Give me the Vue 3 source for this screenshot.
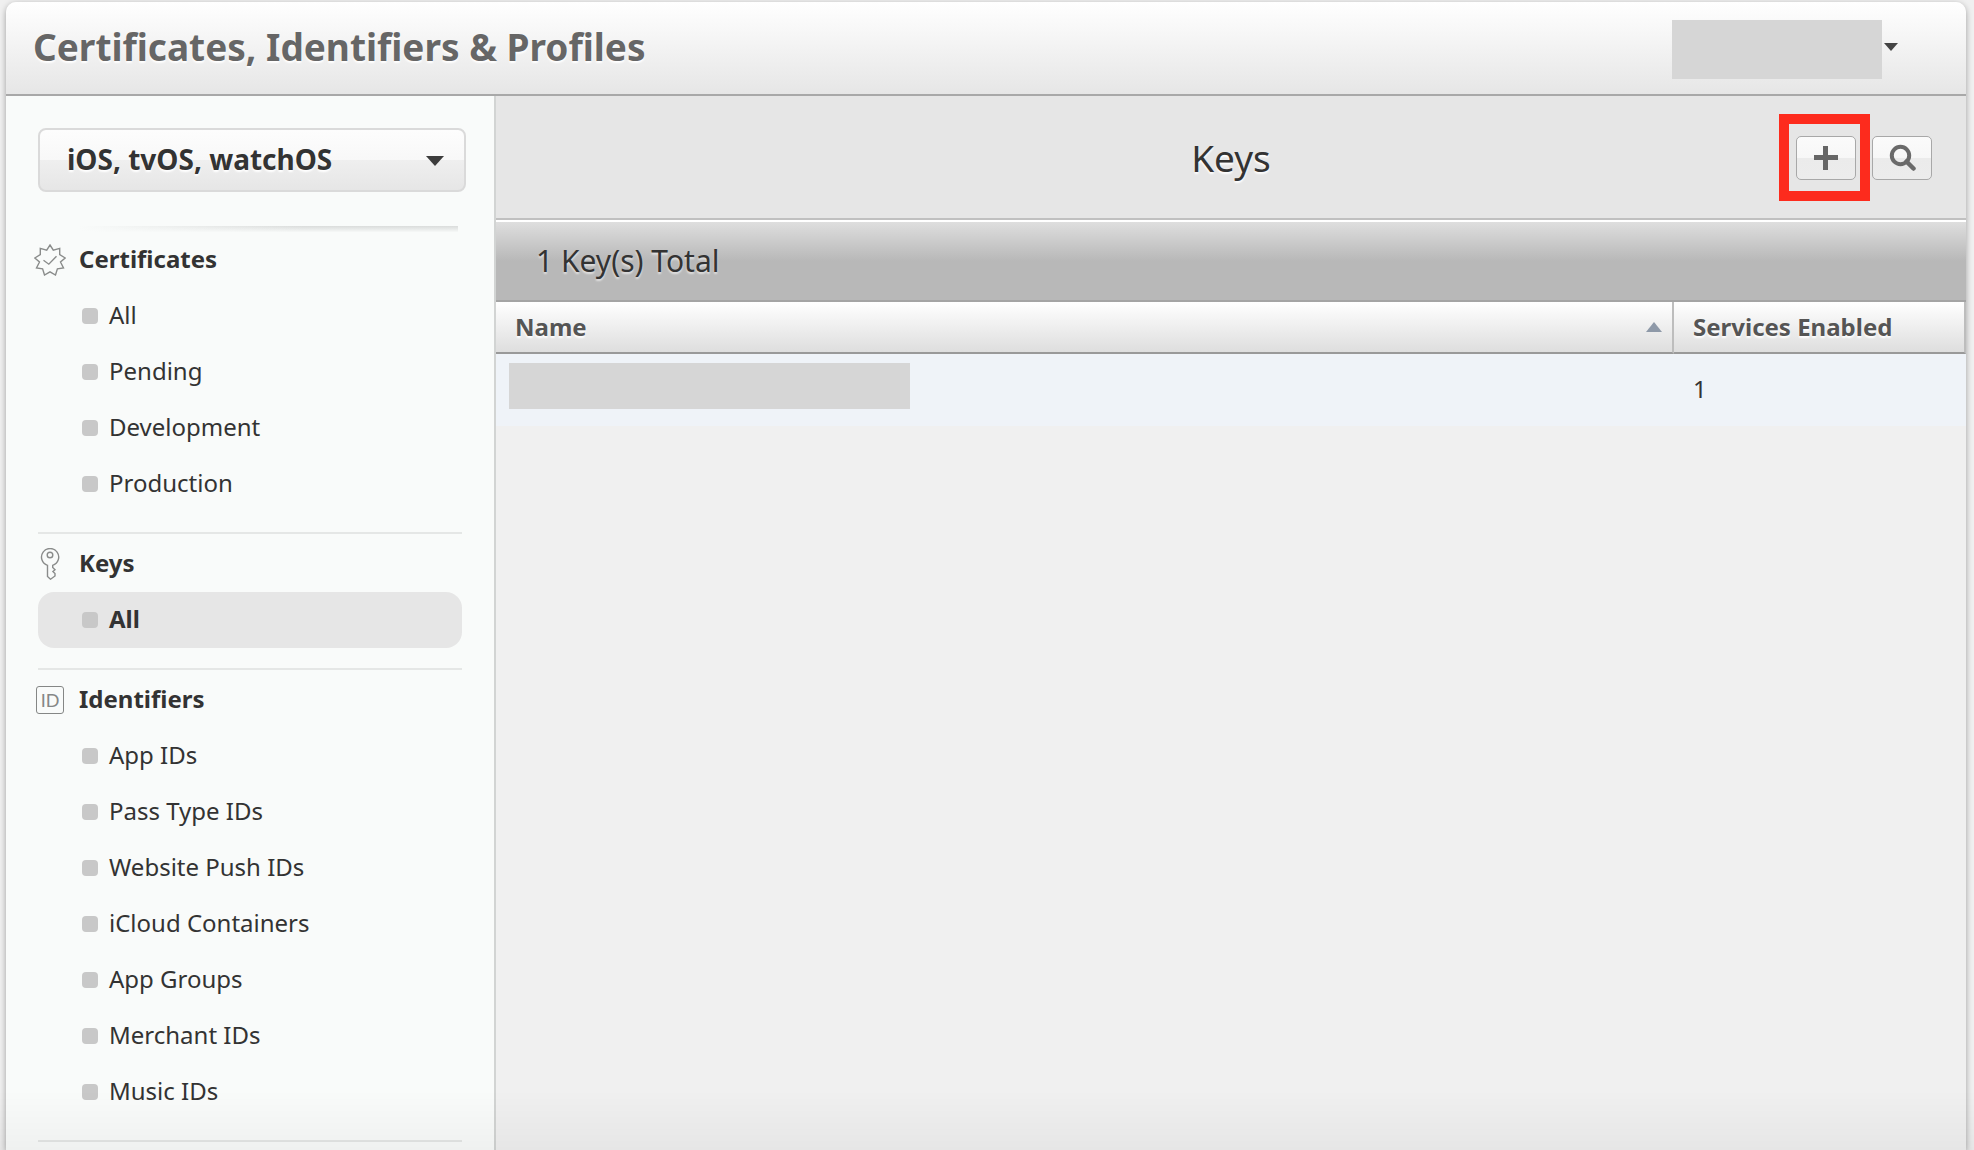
<script setup>
import { ref } from 'vue'

const platform = ref('iOS, tvOS, watchOS')

const groups = [
  { title: 'Certificates', icon: 'seal', items: ['All', 'Pending', 'Development', 'Production'] },
  { title: 'Keys', icon: 'key', items: ['All'], active: 'All' },
  {
    title: 'Identifiers',
    icon: 'id',
    items: ['App IDs', 'Pass Type IDs', 'Website Push IDs', 'iCloud Containers', 'App Groups', 'Merchant IDs', 'Music IDs'],
  },
]
</script>

<template>
  <div class="page">
    <div class="panel">
      <header class="topbar">
        <h1>Certificates, Identifiers &amp; Profiles</h1>
        <button class="account" type="button" aria-label="Account">
          <span class="account-name"></span>
          <svg width="14" height="8" viewBox="0 0 14 8"><path d="M0 0H14L7 8Z" fill="#444" /></svg>
        </button>
      </header>

      <div class="body">
        <aside class="sidebar">
          <div class="platform">
            <select v-model="platform" aria-label="Platform">
              <option>iOS, tvOS, watchOS</option>
              <option>macOS</option>
            </select>
            <svg class="platform-arrow" width="18" height="10" viewBox="0 0 18 10"><path d="M0 0H18L9 10Z" fill="#3c3c3c" /></svg>
          </div>
          <div class="fade-rule"></div>

          <nav>
            <section v-for="group in groups" :key="group.title" class="group">
              <h2>
                <svg v-if="group.icon === 'seal'" width="32" height="32" viewBox="0 0 32 32" fill="none" stroke="#8a8c8b" stroke-width="1.4">
                  <path d="M16 1L19.300 6.100L25.700 4.400L25.700 10.700L31.200 14L26.500 18L29.500 24L23.400 24.800L21.500 31L16 27.800L10.500 31L8.600 24.800L2.500 24L5.500 18L.8 14L6.300 10.700L6.300 4.400L12.700 6.100Z" />
                  <path d="M9.500 16.300L14.800 20.200L22.500 12.300" />
                </svg>
                <svg v-else-if="group.icon === 'key'" width="32" height="32" viewBox="0 0 32 32" fill="none" stroke="#8a8c8b" stroke-width="1.4">
                  <path d="M13.500 17.300A8.600 8.600 0 1 1 18.700 17.300V19.500L21 21.700L18.900 23.600L21 25.500V28L16.500 31.200L13.500 28.500Z" />
                  <circle cx="16" cy="7" r="2.800" />
                </svg>
                <span v-else class="id-icon" aria-hidden="true">ID</span>
                <span class="label">{{ group.title }}</span>
              </h2>
              <ul>
                <li v-for="item in group.items" :key="item">
                  <a href="#" :class="{ active: item === group.active }"><span class="label">{{ item }}</span></a>
                </li>
              </ul>
            </section>
          </nav>
        </aside>

        <main class="content">
          <div class="toolbar">
            <h2>Keys</h2>
            <div class="actions">
              <span class="highlight">
                <button type="button" aria-label="Add key">
                  <svg width="24" height="24" viewBox="0 0 24 24"><path d="M9 0H14V9H24V14H14V24H9V14H0V9H9Z" fill="#666" /></svg>
                </button>
              </span>
              <button type="button" aria-label="Search">
                <svg width="28" height="28" viewBox="0 0 28 28" fill="none" stroke="#6a6a6a">
                  <circle cx="12.500" cy="11.500" r="8.700" stroke-width="4" />
                  <path d="M18.500 17.500L25.500 24.500" stroke-width="4.500" stroke-linecap="round" />
                </svg>
              </button>
            </div>
          </div>

          <p class="summary">1 Key(s) Total</p>

          <table>
            <thead>
              <tr>
                <th>
                  <div class="sortable">
                    Name
                    <svg width="16" height="10" viewBox="0 0 16 10"><path d="M0 10L8 0L16 10Z" fill="#8e99a8" /></svg>
                  </div>
                </th>
                <th class="services">Services Enabled</th>
              </tr>
            </thead>
            <tbody>
              <tr>
                <td><div class="key-name"></div></td>
                <td>1</td>
              </tr>
            </tbody>
          </table>
        </main>
      </div>
    </div>
    <div class="bottom-fade"></div>
  </div>
</template>

<style>
body {
  background: #f0f0f0;
}
</style>

<style scoped>
.page {
  box-sizing: border-box;
  display: flex;
  min-height: 100vh;
  padding: 2px 8px 0 6px;
  font-family: "Lucida Grande", "Noto Sans", sans-serif;
  font-size: 24px;
  line-height: 32px;
  color: #333;
}

h1,
h2,
p,
ul {
  margin: 0;
  padding: 0;
}

.panel {
  flex: 1;
  display: flex;
  flex-direction: column;
  border-radius: 10px 10px 0 0;
  background: #f0f0f0;
  box-shadow: 0 2px 6px rgba(0, 0, 0, 0.35);
}

.topbar {
  display: flex;
  align-items: flex-start;
  justify-content: space-between;
  height: 92px;
  padding: 0 68px 0 27px;
  border-bottom: 2px solid #a8a8a8;
  border-radius: 10px 10px 0 0;
  background: linear-gradient(#fff, #e6e6e6);
}

h1 {
  font-size: 37px;
  line-height: 90px;
  color: #666;
  text-shadow: 0 2px 2px #fff;
}

.account {
  display: flex;
  align-items: center;
  gap: 2px;
  margin-top: 18px;
  padding: 0;
  border: 0;
  background: none;
}

.account svg {
  margin-bottom: 6px;
}

.account-name {
  width: 210px;
  height: 59px;
  background: #d6d6d6;
}

.body {
  flex: 1;
  display: flex;
}

.sidebar {
  box-sizing: border-box;
  flex: none;
  width: 490px;
  padding: 32px 32px 0;
  border-right: 2px solid #d2d4d3;
  background: #f9fbfa;
}

.platform {
  position: relative;
  margin-right: -4px;
}

.platform select {
  appearance: none;
  box-sizing: border-box;
  display: block;
  width: 100%;
  height: 64px;
  padding: 0 48px 2px 27px;
  border: 2px solid #dadada;
  border-radius: 8px;
  background: linear-gradient(#fdfdfd, #f8f8f8 50%, #efefef 50%, #e6e6e6);
  font: bold 28px/36px "Lucida Grande", "Noto Sans", sans-serif;
  color: #333;
  text-shadow: 0 2px 2px #fff;
}

.platform-arrow {
  position: absolute;
  top: 28px;
  right: 22px;
  pointer-events: none;
}

.fade-rule {
  height: 6px;
  margin: 34px 4px 0 40px;
  background: linear-gradient(to right, #f9fbfa, rgba(249, 251, 250, 0) 60%), linear-gradient(#dadcdb, #f6f8f7);
}

.group + .group {
  margin-top: 20px;
  padding-top: 2px;
  border-top: 2px solid #e5e7e6;
}

.group:last-child {
  padding-bottom: 20px;
  border-bottom: 2px solid #e5e7e6;
}

.group h2 {
  display: flex;
  align-items: center;
  gap: 13px;
  height: 56px;
  margin-left: -4px;
  font-size: 24px;
}

.group h2 svg {
  flex: none;
}

.label {
  padding-bottom: 2px;
}

.id-icon {
  box-sizing: border-box;
  width: 28px;
  height: 28px;
  margin: 0 2px;
  border: 1px solid #858786;
  border-radius: 3px;
  font: 18px/26px "Lato", sans-serif;
  text-align: center;
  color: #858786;
}

ul {
  list-style: none;
}

.group a {
  display: flex;
  align-items: center;
  gap: 11px;
  height: 56px;
  padding-left: 44px;
  border-radius: 16px;
  color: #333;
  text-decoration: none;
}

.group a::before {
  content: "";
  width: 16px;
  height: 16px;
  border-radius: 4px;
  background: #c8c8c8;
}

.group a.active {
  background: #e6e6e6;
  font-weight: bold;
}

.content {
  flex: 1;
  min-width: 0;
}

.toolbar {
  display: grid;
  grid-template-columns: 1fr auto 1fr;
  align-items: center;
  height: 120px;
  padding: 2px 34px 0;
  border-bottom: 2px solid #c0c0c0;
  background: #e6e6e6;
}

.toolbar h2 {
  grid-column: 2;
  font-size: 37px;
  line-height: 48px;
  font-weight: normal;
  text-shadow: 0 2px 2px #fff;
}

.actions {
  display: flex;
  justify-content: flex-end;
  gap: 16px;
}

.actions button {
  display: flex;
  align-items: center;
  justify-content: center;
  width: 60px;
  height: 44px;
  padding: 0;
  border: 1px solid #a8a8a8;
  border-radius: 5px;
  background: linear-gradient(#fbfbfb, #f7f7f7 50%, #ebebeb 50%, #ececec);
}

.highlight {
  position: relative;
}

.highlight::after {
  content: "";
  position: absolute;
  inset: -22px -14px -21px -17px;
  border: 10px solid #fd2b1d;
  pointer-events: none;
}

.summary {
  height: 78px;
  padding-left: 40px;
  border-top: 2px solid #fff;
  border-bottom: 2px solid #a4a4a4;
  background: linear-gradient(#dedede, #b8b8b8 50%, #b8b8b8);
  font-size: 30px;
  line-height: 78px;
  text-shadow: 0 2px 2px rgba(255, 255, 255, 0.6);
}

table {
  width: 100%;
  border-collapse: separate;
  border-spacing: 0;
  table-layout: fixed;
}

th {
  box-sizing: border-box;
  height: 52px;
  padding: 0 10px 0 19px;
  border-right: 2px solid #bdbdbd;
  border-bottom: 2px solid #999;
  background: linear-gradient(#fff, #dedede);
  text-align: left;
  color: #555;
  text-shadow: 0 2px 2px #fff;
}

.services {
  width: 292px;
}

.sortable {
  display: flex;
  align-items: center;
  justify-content: space-between;
}

td {
  box-sizing: border-box;
  height: 72px;
  padding: 0 19px 2px;
  background: #eff3f8;
}

.key-name {
  width: 401px;
  height: 46px;
  margin: 0 0 6px -6px;
  background: #d6d6d6;
}

.bottom-fade {
  position: fixed;
  inset: auto 0 0;
  height: 60px;
  background: linear-gradient(rgba(0, 0, 0, 0), rgba(0, 0, 0, 0.04));
  pointer-events: none;
}
</style>
